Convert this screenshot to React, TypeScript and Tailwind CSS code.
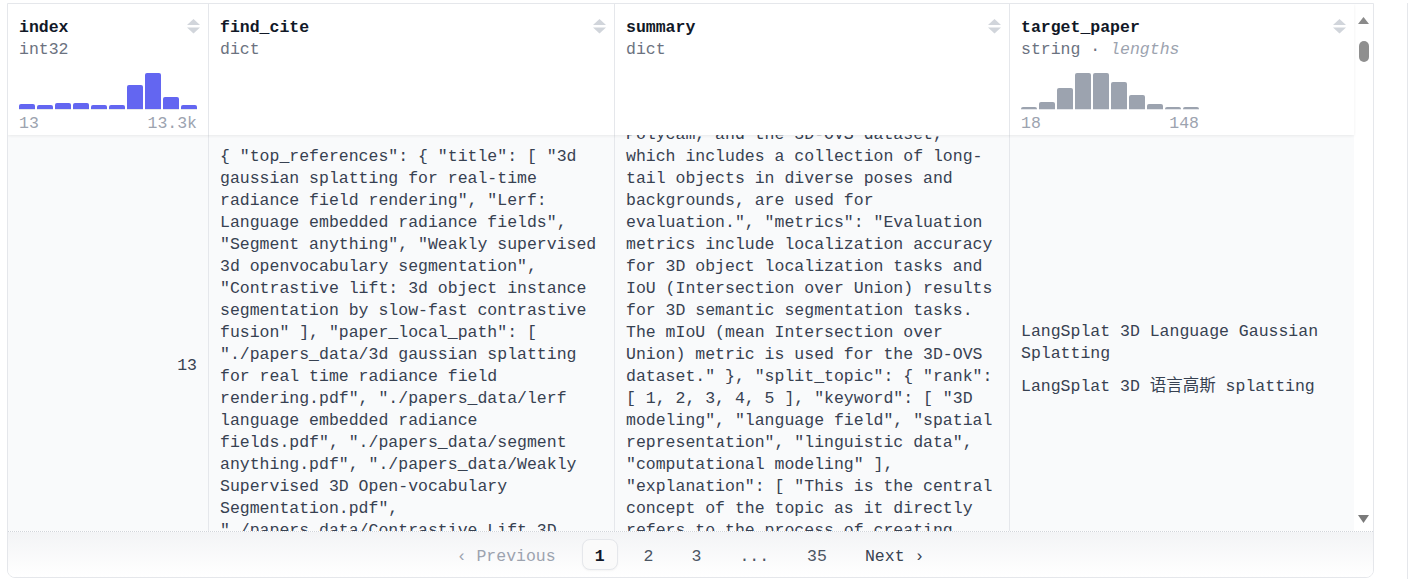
import React from 'react';

const MONO = "font-['Liberation_Mono','Noto_Sans_CJK_SC',monospace]";

interface HistData {
  bars: number[];
  color: string;
  min: string;
  max: string;
}

const INDEX_HIST: HistData = {
  bars: [5, 4, 6, 6, 4, 4, 24, 36, 12, 4],
  color: 'bg-[#6366f1]',
  min: '13',
  max: '13.3k',
};

const TARGET_HIST: HistData = {
  bars: [2, 7, 21, 36, 36, 27, 14, 5, 2, 2],
  color: 'bg-[#9ca3af]',
  min: '18',
  max: '148',
};

const FIND_CITE =
  '{ "top_references": { "title": [ "3d gaussian splatting for real-time radiance field rendering", "Lerf: Language embedded radiance fields", "Segment anything", "Weakly supervised 3d openvocabulary segmentation", "Contrastive lift: 3d object instance segmentation by slow-fast contrastive fusion" ], "paper_local_path": [ "./papers_data/3d gaussian splatting for real time radiance field rendering.pdf", "./papers_data/lerf language embedded radiance fields.pdf", "./papers_data/segment anything.pdf", "./papers_data/Weakly Supervised 3D Open-vocabulary Segmentation.pdf", "./papers_data/Contrastive Lift 3D Object Instance Segmentation by Slow-Fast Contrastive Fusion.pdf" ] } }';

const SUMMARY =
  '{ "data": { "dataset": "The LERF dataset, which contains multiple scenes with complex objects captured using the iOS application called Polycam, and the 3D-OVS dataset, which includes a collection of long-tail objects in diverse poses and backgrounds, are used for evaluation.", "metrics": "Evaluation metrics include localization accuracy for 3D object localization tasks and IoU (Intersection over Union) results for 3D semantic segmentation tasks. The mIoU (mean Intersection over Union) metric is used for the 3D-OVS dataset." }, "split_topic": { "rank": [ 1, 2, 3, 4, 5 ], "keyword": [ "3D modeling", "language field", "spatial representation", "linguistic data", "computational modeling" ], "explanation": [ "This is the central concept of the topic as it directly refers to the process of creating three-dimensional language fields that enable precise open-vocabulary 3D queries within complex scenes.", "LangSplat directly builds upon this topic.", "Language fields provide a semantic layer for understanding." ] } }';

function SortIcon() {
  return (
    <svg width="13" height="15" viewBox="0 0 13 15" className="mt-[2px] shrink-0" fill="#d1d5db">
      <path d="M6.5 0 L13 6 H0 Z" />
      <path d="M0 8.5 H13 L6.5 14.5 Z" />
    </svg>
  );
}

function Histogram({ data }: { data: HistData }) {
  return (
    <div className="mt-[12px] w-[178px]">
      <div className="flex h-[37px] items-end gap-[2px]">
        {data.bars.map((h, i) => (
          <div key={i} className="flex-1 border-b border-[#e5e7eb]">
            <div className={`rounded-t-[2px] ${data.color}`} style={{ height: h }} />
          </div>
        ))}
      </div>
      <div className="mt-[4px] flex justify-between leading-[20px] text-[#9ca3af]">
        <span>{data.min}</span>
        <span>{data.max}</span>
      </div>
    </div>
  );
}

function HeaderCell({
  name,
  type,
  hist,
  width,
  last,
}: {
  name: string;
  type: React.ReactNode;
  hist?: HistData;
  width: string;
  last?: boolean;
}) {
  return (
    <div className={`${width} h-[131px] shrink-0 pl-[11px] pr-2 pt-[13px] ${last ? '' : 'border-r border-[#e5e7eb]'}`}>
      <div className="flex items-start justify-between">
        <span className="font-bold text-[#111827]">{name}</span>
        <SortIcon />
      </div>
      <div className="text-[#6b7280]">{type}</div>
      {hist && <Histogram data={hist} />}
    </div>
  );
}

function Scrollbar() {
  return (
    <div className="flex w-[19px] shrink-0 flex-col items-center bg-white pb-[8px] pt-[13px]">
      <svg width="11" height="7" viewBox="0 0 11 7" fill="#8a8a8a">
        <path d="M5.5 0 L11 7 H0 Z" />
      </svg>
      <div className="mt-[17px] h-[21px] w-[10px] rounded-full bg-[#8f8f8f]" />
      <div className="flex-1" />
      <svg width="11" height="8" viewBox="0 0 11 8" fill="#7a7a7a">
        <path d="M0 0 H11 L5.5 8 Z" />
      </svg>
    </div>
  );
}

function Pagination() {
  return (
    <div className="flex h-[46px] items-center justify-center gap-[14px] border-t border-dotted border-[#d1d5db] bg-linear-to-b from-[#f3f4f6] to-white">
      <span className="px-3 pt-[4px] text-[#9ca3af]">‹ Previous</span>
      <span className="flex h-[31px] items-center rounded-lg border border-[#e5e7eb] bg-[#fafafa] px-3 pt-[4px] font-bold text-[#111827] shadow-[0_1px_2px_rgba(0,0,0,0.04)]">
        1
      </span>
      <span className="px-3 pt-[4px] text-[#4b5563]">2</span>
      <span className="px-3 pt-[4px] text-[#4b5563]">3</span>
      <span className="px-3 pt-[4px] text-[#4b5563]">...</span>
      <span className="px-3 pt-[4px] text-[#4b5563]">35</span>
      <span className="px-3 pt-[4px] text-[#374151]">Next ›</span>
    </div>
  );
}

export default function App() {
  return (
    <div className={`flex h-[579px] w-full bg-white pt-[3px] text-[16.5px] leading-[22px] ${MONO}`}>
      <div className="ml-[7px] flex w-[1367px] shrink-0 flex-col self-start overflow-hidden rounded-b-lg border border-[#e5e7eb]">
        <div className="flex h-[527px]">
          <div className="flex w-[1346px] flex-col">
            {/* Header */}
            <div className="relative z-10 flex bg-white shadow-[0_1px_3px_rgba(0,0,0,0.07)]">
              <HeaderCell name="index" type="int32" hist={INDEX_HIST} width="w-[201px]" />
              <HeaderCell name="find_cite" type="dict" width="w-[406px]" />
              <HeaderCell name="summary" type="dict" width="w-[395px]" />
              <HeaderCell
                name="target_paper"
                type={
                  <>
                    string · <span className="italic text-[#9ca3af]">lengths</span>
                  </>
                }
                hist={TARGET_HIST}
                width="w-[344px]"
                last
              />
            </div>

            {/* Body, scrolled */}
            <div className="h-[396px] overflow-hidden bg-[#f9fafb] text-[#374151]">
              <div className="-mt-[107px] flex items-stretch">
                <div className="flex w-[201px] shrink-0 items-center justify-end border-r border-[#e5e7eb] px-[11px]">
                  13
                </div>
                <div className="flex w-[406px] shrink-0 flex-col justify-center border-r border-[#e5e7eb] px-[11px] py-2">
                  <p>{FIND_CITE}</p>
                </div>
                <div className="flex w-[395px] shrink-0 flex-col justify-center border-r border-[#e5e7eb] px-[11px] py-2">
                  <p>{SUMMARY}</p>
                </div>
                <div className="flex w-[344px] shrink-0 flex-col justify-center px-[11px] pb-[13px]">
                  <p>LangSplat 3D Language Gaussian Splatting</p>
                  <p className="mt-[11px]">LangSplat 3D 语言高斯 splatting</p>
                </div>
              </div>
            </div>
          </div>
          <Scrollbar />
        </div>
        <Pagination />
      </div>
      <div className="ml-[33px] h-[579px] w-px shrink-0 bg-[#e5e7eb]" />
    </div>
  );
}
